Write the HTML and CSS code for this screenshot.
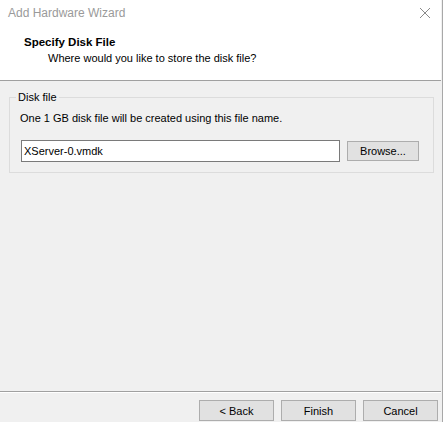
FILE: index.html
```html
<!DOCTYPE html>
<html>
<head>
<meta charset="utf-8">
<link rel="stylesheet" href="styles.css">
</head>
<body>
<div class="window">
  <div class="titlebar">
    <span class="title">Add Hardware Wizard</span>
    <svg class="close" width="12" height="12" viewBox="0 0 12 12"><path d="M1 1L11 11M11 1L1 11" stroke="#8a8a8a" stroke-width="1" fill="none"/></svg>
  </div>
  <div class="header">
    <div class="h-title">Specify Disk File</div>
    <div class="h-sub">Where would you like to store the disk file?</div>
  </div>
  <div class="content">
    <fieldset class="group">
      <legend class="legend">Disk file</legend>
      <p class="desc">One 1 GB disk file will be created using this file name.</p>
      <div class="row">
        <div class="input">XServer-0.vmdk</div>
        <div class="btn browse">Browse...</div>
      </div>
    </fieldset>
  </div>
  <div class="footer">
    <div class="buttons">
      <div class="btn">&lt; Back</div>
      <div class="btn">Finish</div>
      <div class="btn">Cancel</div>
    </div>
  </div>
</div>
</body>
</html>
```
FILE: styles.css
```css
* { box-sizing: border-box; }
html, body { margin: 0; padding: 0; }
body {
  background: #f0f0f0;
  font-family: "Liberation Sans", Arial, sans-serif;
  font-size: 11px;
  color: #000;
}
.window {
  width: 443px;
  height: 422px;
  border-right: 1px solid #a8a8a8;
  display: flex;
  flex-direction: column;
  background: #f0f0f0;
}
.titlebar {
  height: 27px;
  background: #fff;
  display: flex;
  align-items: center;
  justify-content: space-between;
  padding: 0 10px 1px 8px;
  width: 441px;
}
.title { color: #9a9a9a; line-height: 16px; font-size: 12px; }
.close { display: block; }
.header {
  background: #fff;
  height: 54px;
  width: 441px;
  border-bottom: 1px solid #a0a0a0;
  padding-top: 7px;
}
.h-title { font-weight: bold; padding-left: 24px; line-height: 16px; font-size: 11.5px; }
.h-sub { padding-left: 48px; line-height: 16px; }
.content {
  flex: 1;
  padding-top: 8px;
}
.group {
  margin: 0 8px 0 9px;
  padding: 0 0 10px 0;
  border: 1px solid #dcdcdc;
  min-width: 0;
}
.legend {
  margin-left: 6px;
  padding: 0 2px;
  line-height: 16px;
}
.desc {
  margin: 5px 0 0 10px;
  line-height: 16px;
}
.row {
  display: flex;
  align-items: center;
  margin: 14px 0 0 11px;
}
.input {
  width: 319px;
  height: 22px;
  border: 1px solid #7a7a7a;
  background: #fff;
  padding-left: 2px;
  line-height: 20px;
}
.btn {
  height: 21px;
  width: 75px;
  border: 1px solid #adadad;
  background: #e1e1e1;
  display: flex;
  align-items: center;
  justify-content: center;
  line-height: 16px;
}
.browse { width: 72px; height: 20px; margin-left: 7px; }
.footer {
  width: 441px;
  border-top: 1px solid #a0a0a0;
  box-shadow: inset 0 1px 0 #fff;
  padding: 8px 3px 1px 0;
  display: flex;
  justify-content: flex-end;
}
.buttons { display: flex; gap: 7px; }
```
